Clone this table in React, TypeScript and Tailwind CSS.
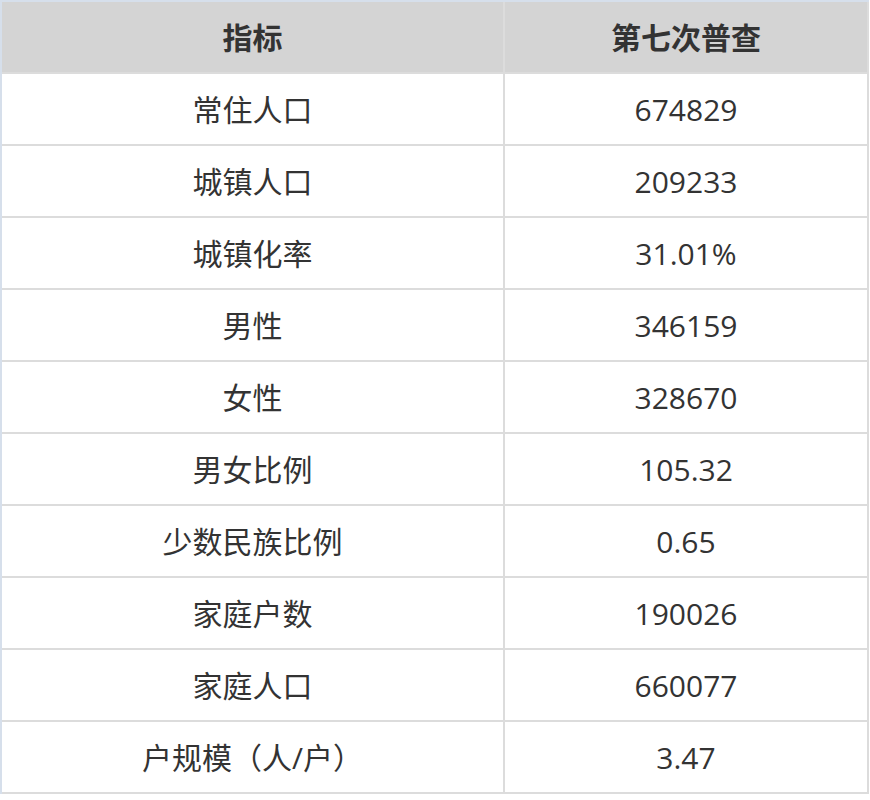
const rows: [string, string][] = [
  ['常住人口', '674829'],
  ['城镇人口', '209233'],
  ['城镇化率', '31.01%'],
  ['男性', '346159'],
  ['女性', '328670'],
  ['男女比例', '105.32'],
  ['少数民族比例', '0.65'],
  ['家庭户数', '190026'],
  ['家庭人口', '660077'],
  ['户规模（人/户）', '3.47'],
];

const font = { fontFamily: '"Open Sans", "Noto Sans CJK SC", sans-serif' };

export default function App() {
  return (
    <div className="w-[870px] h-[800px] bg-white" style={font}>
      <div className="w-[869px] border-l-2 border-t-2 border-[#d6dfeb] text-[30px] text-[#333333]">
        <div className="grid grid-cols-[503px_364px] h-[72px] bg-[#d4d4d4] border-b-2 border-[#dcdcdc] font-bold">
          <div className="flex items-center justify-center border-r-2 border-[#dcdcdc]">指标</div>
          <div className="flex items-center justify-center border-r-2 border-[#dcdcdc]">第七次普查</div>
        </div>
        {rows.map(([label, value]) => (
          <div key={label} className="grid grid-cols-[503px_364px] h-[72px] border-b-2 border-[#dcdcdc]">
            <div className="flex items-center justify-center border-r-2 border-[#dcdcdc]">{label}</div>
            <div className="flex items-center justify-center border-r-2 border-[#dcdcdc]">{value}</div>
          </div>
        ))}
      </div>
    </div>
  );
}
